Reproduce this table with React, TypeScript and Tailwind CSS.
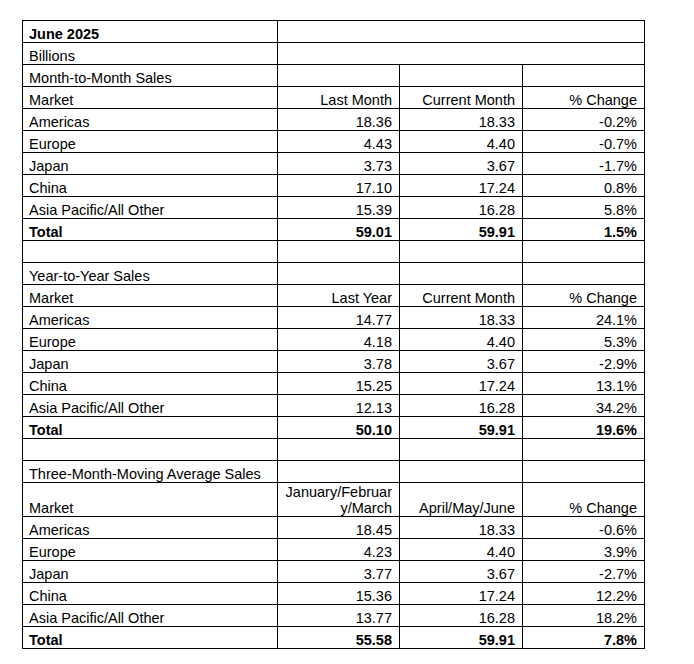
import React from "react";

type Row = [string, string, string, string];

const monthRows: Row[] = [
  ["Americas", "18.36", "18.33", "-0.2%"],
  ["Europe", "4.43", "4.40", "-0.7%"],
  ["Japan", "3.73", "3.67", "-1.7%"],
  ["China", "17.10", "17.24", "0.8%"],
  ["Asia Pacific/All Other", "15.39", "16.28", "5.8%"],
];
const monthTotal: Row = ["Total", "59.01", "59.91", "1.5%"];

const yearRows: Row[] = [
  ["Americas", "14.77", "18.33", "24.1%"],
  ["Europe", "4.18", "4.40", "5.3%"],
  ["Japan", "3.78", "3.67", "-2.9%"],
  ["China", "15.25", "17.24", "13.1%"],
  ["Asia Pacific/All Other", "12.13", "16.28", "34.2%"],
];
const yearTotal: Row = ["Total", "50.10", "59.91", "19.6%"];

const avgRows: Row[] = [
  ["Americas", "18.45", "18.33", "-0.6%"],
  ["Europe", "4.23", "4.40", "3.9%"],
  ["Japan", "3.77", "3.67", "-2.7%"],
  ["China", "15.36", "17.24", "12.2%"],
  ["Asia Pacific/All Other", "13.77", "16.28", "18.2%"],
];
const avgTotal: Row = ["Total", "55.58", "59.91", "7.8%"];

function L({ children, bold }: { children?: React.ReactNode; bold?: boolean }) {
  return (
    <div
      className={
        "h-[22px] border-r border-b border-black flex items-end pl-[6px] leading-[16px] whitespace-nowrap" +
        (bold ? " font-bold" : "")
      }
    >
      {children}
    </div>
  );
}

function R({ children, bold }: { children?: React.ReactNode; bold?: boolean }) {
  return (
    <div
      className={
        "h-[22px] border-r border-b border-black flex items-end justify-end pr-[7px] leading-[16px] whitespace-nowrap" +
        (bold ? " font-bold" : "")
      }
    >
      {children}
    </div>
  );
}

function DataRow({ row, bold }: { row: Row; bold?: boolean }) {
  return (
    <>
      <L bold={bold}>{row[0]}</L>
      <R bold={bold}>{row[1]}</R>
      <R bold={bold}>{row[2]}</R>
      <R bold={bold}>{row[3]}</R>
    </>
  );
}

function TitleRow({ title }: { title?: string }) {
  return (
    <>
      <L>{title}</L>
      <R />
      <R />
      <R />
    </>
  );
}

export default function App() {
  return (
    <div className="min-h-screen bg-white pt-[20px] pl-[22px] font-['Liberation_Sans',Arial,sans-serif] text-[14.5px] text-black">
      <div className="grid w-fit grid-cols-[255px_122px_123px_122px] border-l border-t border-black">
        <L bold>June 2025</L>
        <div className="col-span-3 h-[22px] border-r border-b border-black" />
        <L>Billions</L>
        <div className="col-span-3 h-[22px] border-r border-b border-black" />

        <TitleRow title="Month-to-Month Sales" />
        <DataRow row={["Market", "Last Month", "Current Month", "% Change"]} />
        {monthRows.map((r) => (
          <DataRow key={"m" + r[0]} row={r} />
        ))}
        <DataRow row={monthTotal} bold />
        <TitleRow />

        <TitleRow title="Year-to-Year Sales" />
        <DataRow row={["Market", "Last Year", "Current Month", "% Change"]} />
        {yearRows.map((r) => (
          <DataRow key={"y" + r[0]} row={r} />
        ))}
        <DataRow row={yearTotal} bold />
        <TitleRow />

        <TitleRow title="Three-Month-Moving Average Sales" />
        <div className="h-[34px] border-r border-b border-black flex items-end pl-[6px] leading-[16px]">
          Market
        </div>
        <div className="h-[34px] border-r border-b border-black flex items-end justify-end pr-[7px] leading-[16px] text-right">
          <span>
            January/Februar
            <br />
            y/March
          </span>
        </div>
        <div className="h-[34px] border-r border-b border-black flex items-end justify-end pr-[7px] leading-[16px]">
          April/May/June
        </div>
        <div className="h-[34px] border-r border-b border-black flex items-end justify-end pr-[7px] leading-[16px]">
          % Change
        </div>
        {avgRows.map((r) => (
          <DataRow key={"a" + r[0]} row={r} />
        ))}
        <DataRow row={avgTotal} bold />
      </div>
    </div>
  );
}
